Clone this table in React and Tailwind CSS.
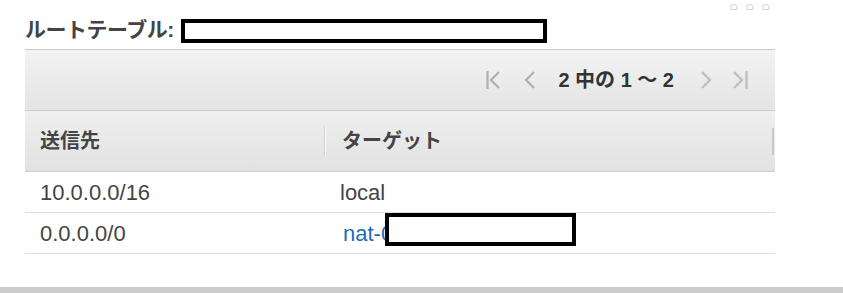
import React from 'react';

const jp = "font-['Liberation_Sans','Noto_Sans_CJK_JP',sans-serif]";

// pager arrows
function FirstIcon() {
  return (
    <svg width="14" height="20" viewBox="0 0 14 20" fill="none" stroke="#b0b0b0" strokeWidth="2.2">
      <line x1="1.5" y1="1" x2="1.5" y2="19" />
      <polyline points="13,2 5,10 13,18" />
    </svg>
  );
}

function PrevIcon() {
  return (
    <svg width="12" height="20" viewBox="0 0 12 20" fill="none" stroke="#b0b0b0" strokeWidth="2.2">
      <polyline points="11,2 3,10 11,18" />
    </svg>
  );
}

function NextIcon() {
  return (
    <svg width="12" height="20" viewBox="0 0 12 20" fill="none" stroke="#bdbdbd" strokeWidth="2.2">
      <polyline points="1,2 9,10 1,18" />
    </svg>
  );
}

function LastIcon() {
  return (
    <svg width="15" height="20" viewBox="0 0 15 20" fill="none" stroke="#bdbdbd" strokeWidth="2.2">
      <polyline points="1,2 9,10 1,18" />
      <line x1="13.5" y1="1" x2="13.5" y2="19" />
    </svg>
  );
}

function TinyIcon() {
  return (
    <svg width="8" height="6" viewBox="0 0 8 6" fill="none" stroke="#d4d4d4" strokeWidth="1">
      <path d="M1 5.5 L1 2.5 Q1 0.5 4 0.5 Q7 0.5 7 2.5 L7 5.5 Z" />
    </svg>
  );
}

const rows = [
  { dest: '10.0.0.0/16', target: 'local' },
  { dest: '0.0.0.0/0', target: 'nat-0', link: true },
];

export default function App() {
  return (
    <div className={`relative w-[843px] h-[293px] bg-white flex flex-col ${jp}`}>
      {/* window buttons */}
      <div className="absolute left-[730px] top-[4px] flex gap-[8px]">
        <TinyIcon />
        <TinyIcon />
        <TinyIcon />
      </div>

      {/* title */}
      <div className="flex items-start pl-[25px] pt-[19px] h-[43px]">
        <span className="text-[21px] font-bold leading-[20px] mt-[1px] text-[#444444] tracking-[-0.5px]">
          ルートテーブル:
        </span>
        <div className="ml-auto mr-[296px] w-[366px] h-[24px] border-[4px] border-black bg-white" />
      </div>

      {/* table panel */}
      <div className="ml-[25px] mt-[6px] w-[750px]">
        <div className="h-[62px] border-y border-[#cccccc] bg-gradient-to-b from-[#f3f3f3] to-[#e4e4e4] flex items-center justify-end pr-[27px]">
          <FirstIcon />
          <div className="w-[23px]" />
          <PrevIcon />
          <span className="ml-[23px] mr-[27px] text-[20px] font-bold text-[#333333] whitespace-pre">
            2 中の 1 ～ 2
          </span>
          <NextIcon />
          <div className="w-[20px]" />
          <LastIcon />
        </div>

        <div className="h-[61px] border-b border-[#cccccc] bg-gradient-to-b from-[#efefef] to-[#e2e2e2] flex items-center">
          <div className="w-[299px] pl-[15px] text-[20px] font-bold text-[#444444]">送信先</div>
          <div className="w-[2px] h-[28px] bg-[#d0d0d0] border-r border-white" />
          <div className="flex-1 pl-[16px] text-[20px] font-bold text-[#444444]">ターゲット</div>
          <div className="w-[2px] h-[27px] bg-[#c8c8c8] mr-[1px]" />
        </div>

        {rows.map((r) => (
          <div key={r.dest} className="h-[41px] border-b border-[#dddddd] flex items-center text-[22px] text-[#444444]">
            <div className="w-[300px] pl-[15px]">{r.dest}</div>
            {r.link ? (
              <div className="flex items-start self-stretch pl-[18px]">
                <span className="self-center text-[#1f6db4]">{r.target}</span>
                <div className="-ml-[8px] w-[191px] h-[33px] border-[4px] border-black bg-white" />
              </div>
            ) : (
              <div className="pl-[15px]">{r.target}</div>
            )}
          </div>
        ))}
      </div>

      {/* bottom bar */}
      <div className="mt-auto h-[6px] bg-[#cccccc]" />
    </div>
  );
}
